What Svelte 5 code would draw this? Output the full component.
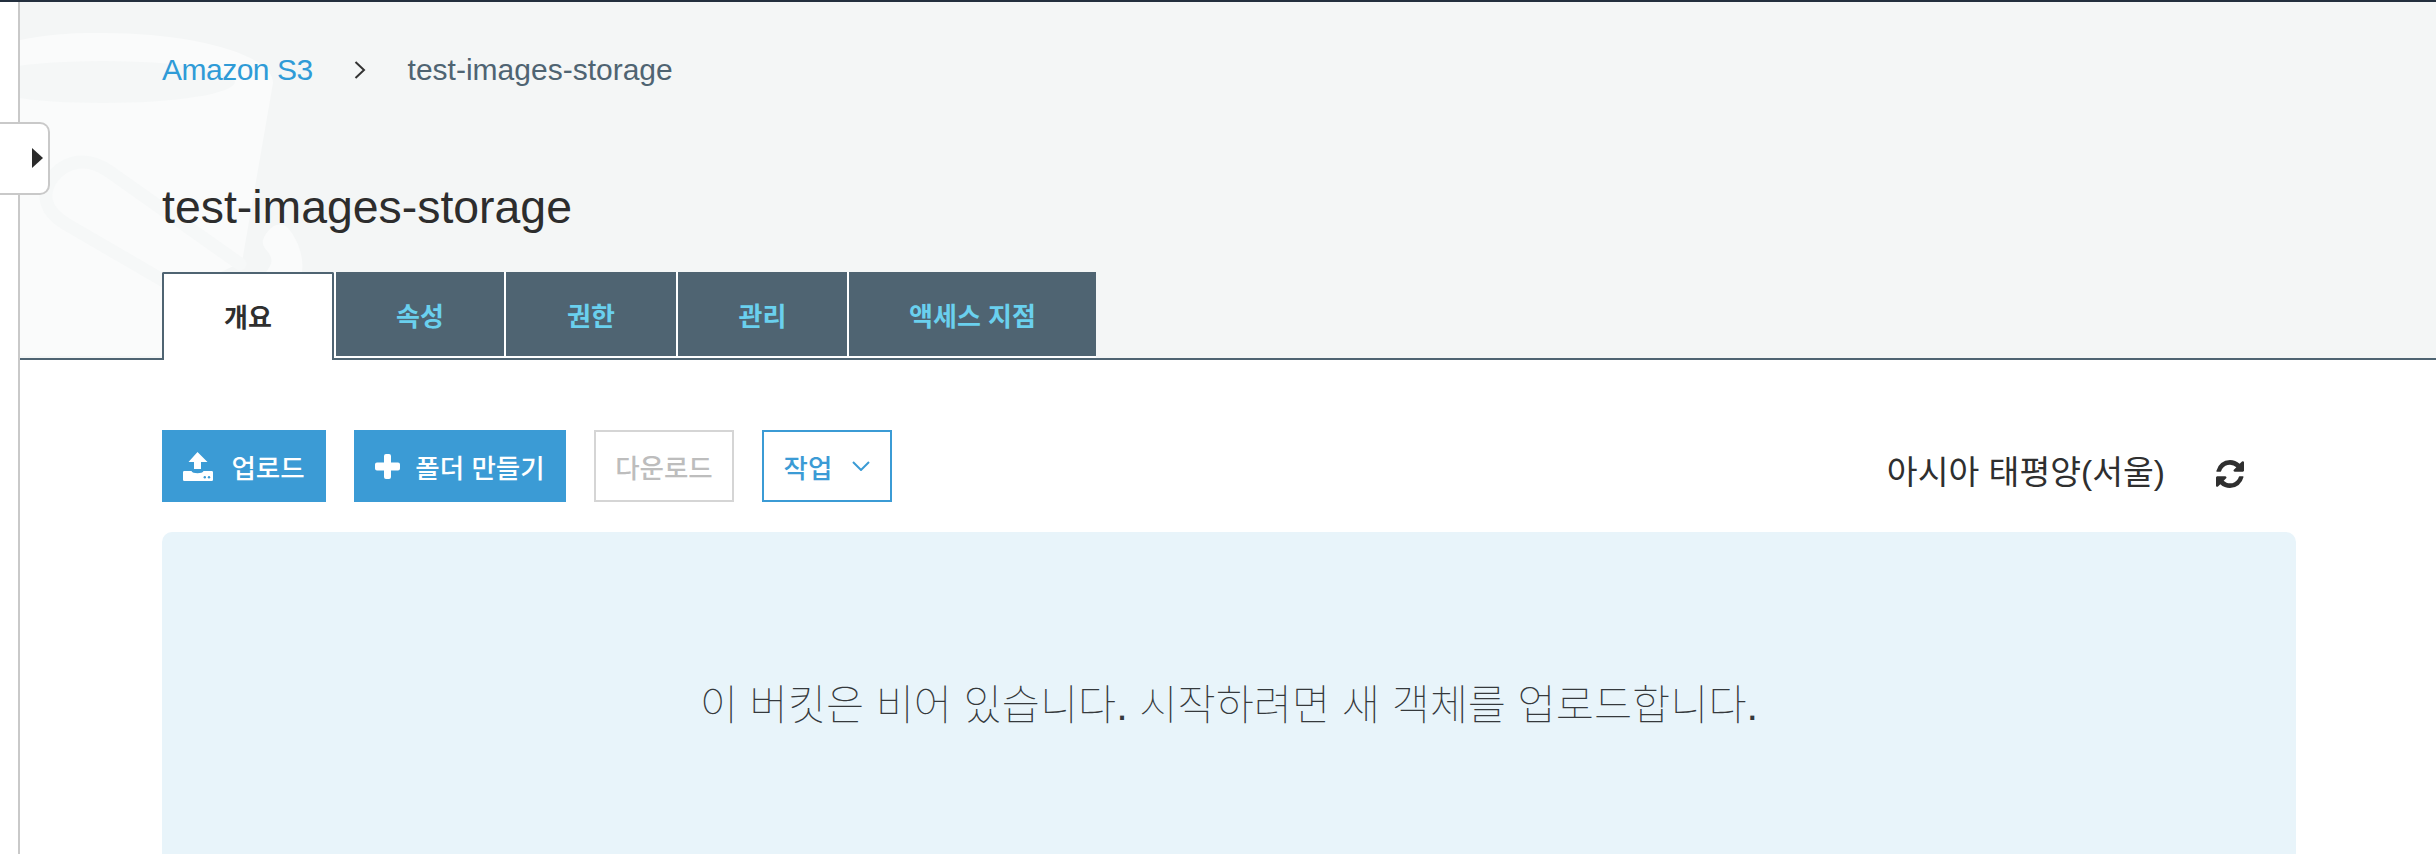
<script>
  const tabs = ['개요', '속성', '권한', '관리', '액세스 지점'];
</script>

<div class="page">
  <aside class="rail">
    <button class="handle" aria-label="탐색 열기"><span class="tri"></span></button>
  </aside>
  <main class="main">
    <header class="head">
      <svg class="mark" viewBox="20 2 400 356" width="400" height="356" aria-hidden="true">
        <path class="light" d="M20 40 C55 33 80 33 103 33 C195 33 273 55 273 83 L242 262 L162 300 L162 356 L20 356 Z" />
        <ellipse class="dark" cx="103" cy="82" rx="132" ry="21" />
        <path class="band" d="M240 264 L110 172 C88 156 66 160 52 178 C40 196 46 212 66 224 L176 288" />
        <path class="light" d="M263 240 C268 226 280 220 288 228 C298 240 304 256 302 272 L266 272 C274 262 272 258 268 252 C264 248 262 244 263 240 Z" />
      </svg>
      <nav class="crumbs">
        <a href="#s3">Amazon S3</a>
        <svg class="sep" viewBox="0 0 12 18" width="12" height="18" aria-hidden="true"><path d="M1.5 1 L10 9 L1.5 17" /></svg>
        <span>test-images-storage</span>
      </nav>
      <h1>test-images-storage</h1>
      <div class="tabs">
        {#each tabs as t, i}
          <button class="tab" class:active={i === 0}>{t}</button>
        {/each}
      </div>
    </header>

    <section class="body">
      <div class="toolbar">
        <button class="btn primary upload">
          <svg viewBox="179 453 30 29" width="30" height="29" aria-hidden="true">
            <path fill="#fff" d="M193.5 453 L203.5 463 L197 463 L197 470 L190 470 L190 463 L184.5 463 Z" />
            <path fill="#fff" d="M180.3 472 L187.5 472 C188 475 199 475 199.5 472 L207.7 472 Q209 472 209 473.3 L209 480.7 Q209 482 207.7 482 L180.3 482 Q179 482 179 480.7 L179 473.3 Q179 472 180.3 472 Z" />
            <circle cx="200.8" cy="478.2" r="1.2" fill="#3b9bd5" />
            <circle cx="205" cy="478.2" r="1.2" fill="#3b9bd5" />
          </svg>
          <span>업로드</span>
        </button>
        <button class="btn primary folder">
          <svg viewBox="0 0 25 25" width="25" height="25" aria-hidden="true">
            <path fill="#fff" d="M9 2 Q9 0 11 0 L14 0 Q16 0 16 2 L16 8.5 L23 8.5 Q25 8.5 25 10.5 L25 14.5 Q25 16.5 23 16.5 L16 16.5 L16 23 Q16 25 14 25 L11 25 Q9 25 9 23 L9 16.5 L2 16.5 Q0 16.5 0 14.5 L0 10.5 Q0 8.5 2 8.5 L9 8.5 Z" />
          </svg>
          <span>폴더 만들기</span>
        </button>
        <button class="btn disabled">다운로드</button>
        <button class="btn outline">
          <span>작업</span>
          <svg viewBox="0 0 18 10" width="18" height="10" aria-hidden="true"><path d="M1 1 L9 9 L17 1" /></svg>
        </button>
        <div class="region">
          <span>아시아 태평양(서울)</span>
          <svg viewBox="128 128 1536 1536" width="28" height="28" aria-hidden="true"><path fill="#2f2f2f" d="M1639 1056q0 5-1 7-64 268-268 434.5t-478 166.5q-146 0-282.5-55t-243.5-157l-129 129q-19 19-45 19t-45-19-19-45v-448q0-26 19-45t45-19h448q26 0 45 19t19 45-19 45l-137 137q71 66 161 102t187 36q134 0 250-65t186-179q11-17 53-117 8-23 30-23h192q13 0 22.5 9.5t9.5 22.5zm25-800v448q0 26-19 45t-45 19h-448q-26 0-45-19t-19-45 19-45l138-138q-148-137-349-137-134 0-250 65t-186 179q-11 17-53 117-8 23-30 23h-199q-13 0-22.5-9.5t-9.5-22.5v-7q65-268 270-434.5t480-166.5q146 0 284 55.5t245 156.5l130-129q19-19 45-19t45 19 19 45z" /></svg>
        </div>
      </div>
      <div class="empty">이 버킷은 비어 있습니다. 시작하려면 새 객체를 업로드합니다.</div>
    </section>
  </main>
</div>

<style>
  :global(body) {
    margin: 0;
    background: #fff;
  }
  .page {
    display: flex;
    height: 852px;
    width: 2436px;
    overflow: hidden;
    border-top: 2px solid #232f3e;
    font-family: "Liberation Sans", "Noto Sans CJK KR", sans-serif;
    color: #2f2f2f;
  }
  .rail {
    position: relative;
    flex: 0 0 18px;
    border-right: 2px solid #c9c9c9;
    z-index: 2;
  }
  .handle {
    position: absolute;
    top: 120px;
    left: 0;
    width: 50px;
    height: 73px;
    box-sizing: border-box;
    padding: 0;
    background: #fff;
    border: 2px solid #c9c9c9;
    border-left: none;
    border-radius: 0 10px 10px 0;
  }
  .tri {
    position: absolute;
    left: 32px;
    top: 24px;
    width: 0;
    height: 0;
    border-left: 11px solid #2b2b2b;
    border-top: 10px solid transparent;
    border-bottom: 10px solid transparent;
  }
  .main {
    flex: 1;
    min-width: 0;
  }
  .head {
    position: relative;
    display: flex;
    flex-direction: column;
    height: 358px;
    box-sizing: border-box;
    padding: 52px 0 0 142px;
    background: #f4f6f6;
    border-bottom: 2px solid #4f6472;
  }
  .mark {
    position: absolute;
    left: 0;
    top: 0;
  }
  .light {
    fill: #fafbfb;
  }
  .dark {
    fill: #f5f7f7;
  }
  .band {
    fill: none;
    stroke: #f6f8f8;
    stroke-width: 13;
    stroke-linecap: round;
  }
  .crumbs {
    position: relative;
    display: flex;
    align-items: center;
    height: 32px;
    font-size: 30px;
    color: #4f6472;
  }
  .crumbs a {
    color: #2f9bd7;
    text-decoration: none;
    letter-spacing: -0.5px;
  }
  .sep {
    margin: 0 42px 0 41px;
  }
  .sep path {
    fill: none;
    stroke: #333;
    stroke-width: 2;
  }
  h1 {
    position: relative;
    margin: 96px 0 0;
    font-size: 46.4px;
    line-height: 50px;
    font-weight: 400;
    color: #2d2d2d;
  }
  .tabs {
    position: relative;
    align-self: flex-start;
    margin-top: auto;
    display: flex;
    align-items: flex-start;
    gap: 2px;
    height: 86px;
    background: #fff;
  }
  .tab {
    width: 170px;
    height: 86px;
    box-sizing: border-box;
    padding: 0;
    border: none;
    border-bottom: 2px solid #fff;
    background: #4f6472;
    color: #6ad0ee;
    font: 700 26px "Liberation Sans", "Noto Sans CJK KR", sans-serif;
  }
  .tab:nth-child(2) {
    width: 168px;
  }
  .tab:nth-child(4) {
    width: 169px;
  }
  .tab:last-child {
    width: 247px;
  }
  .tab.active {
    width: 172px;
    height: 88px;
    background: #fff;
    color: #2f2f2f;
    border: 2px solid #4f6472;
    border-bottom: none;
    border-radius: 2px 2px 0 0;
    padding-bottom: 4px;
  }
  .body {
    padding: 70px 140px 0 142px;
  }
  .toolbar {
    display: flex;
    align-items: center;
    height: 72px;
  }
  .btn {
    display: inline-flex;
    align-items: center;
    justify-content: center;
    height: 72px;
    box-sizing: border-box;
    padding: 0;
    border: none;
    font: 500 26.5px "Liberation Sans", "Noto Sans CJK KR", sans-serif;
  }
  .primary {
    background: #3b9bd5;
    color: #fff;
  }
  .upload {
    width: 164px;
    gap: 18px;
  }
  .folder {
    width: 212px;
    margin-left: 28px;
    gap: 15px;
  }
  .disabled {
    width: 140px;
    margin-left: 28px;
    background: #fff;
    color: #bdbdbd;
    border: 2px solid #d5d5d5;
  }
  .outline {
    width: 130px;
    margin-left: 28px;
    gap: 20px;
    background: #fff;
    color: #3b9bd5;
    border: 2px solid #3b9bd5;
  }
  .outline path {
    fill: none;
    stroke: #3b9bd5;
    stroke-width: 2;
  }
  .region {
    display: flex;
    align-items: center;
    gap: 51px;
    margin-left: auto;
    margin-right: 52px;
    padding-top: 6px;
    font-size: 33.5px;
  }
  .region svg {
    margin-top: 10px;
  }
  .empty {
    margin-top: 30px;
    height: 400px;
    box-sizing: border-box;
    padding-top: 144px;
    text-align: center;
    font-size: 41.5px;
    line-height: 60px;
    font-weight: 100;
    color: #35393c;
    background: #e8f4fa;
    border-radius: 10px 10px 0 0;
  }
</style>
